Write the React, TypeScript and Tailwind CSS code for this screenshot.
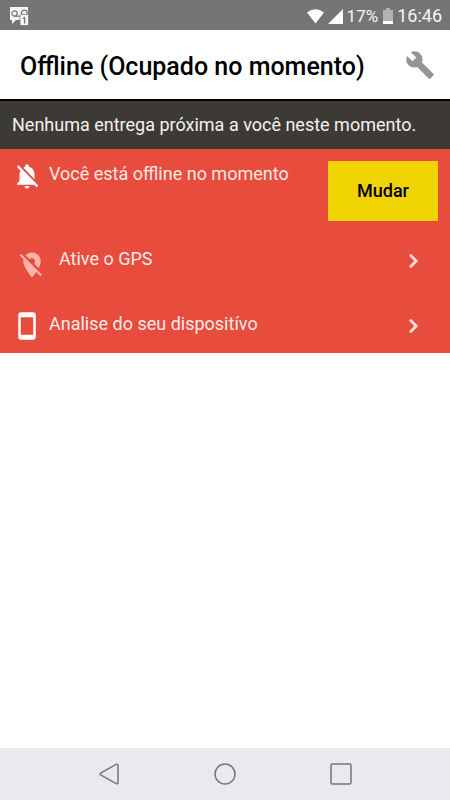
import type { ReactNode } from 'react';
import { MdBuild, MdNotificationsOff, MdStayCurrentPortrait } from 'react-icons/md';

const StatusBar = () => (
  <div className="flex h-[30px] items-center justify-between bg-[#757575] px-2 pt-0.5 text-[#f5f5f5]">
    <svg className="ml-[2px] h-[19px] w-[19px]" viewBox="0 0 19 19" aria-label="Voicemail">
      <path d="M0 0h18v13H6l-4 4v-4H0z" fill="#f5f5f5" />
      <circle cx="4.500" cy="6.500" r="2.600" fill="none" stroke="#757575" strokeWidth="1.200" />
      <path d="M4.500 9.200h5.500" stroke="#757575" strokeWidth="1.200" />
      <path d="M11.500 8V6a2.800 2.800 0 0 1 5.600 0v2" fill="none" stroke="#757575" strokeWidth="1.300" />
      <rect x="10" y="7.500" width="8.500" height="11" rx="1" fill="#f5f5f5" stroke="#757575" strokeWidth=".7" />
      <path d="M12.800 11.500l1.800-1v6" fill="none" stroke="#757575" strokeWidth="1.300" />
    </svg>
    <div className="flex items-center">
      <svg className="h-[15px] w-[17px]" viewBox="0 0 17 15" aria-label="Wi-Fi">
        <path d="M0 3.500Q8.500-3 17 3.500L8.500 14.500z" fill="#fff" />
      </svg>
      <svg className="ml-1 h-[15px] w-[15px]" viewBox="0 0 15 15" aria-label="Signal">
        <path d="M15 0v15H0z" fill="#fff" />
      </svg>
      <span className="ml-1 text-[17px] leading-5">17%</span>
      <svg className="ml-[5px] h-4 w-[10px]" viewBox="0 0 10 16" aria-label="Battery">
        <path d="M3 0h4v2h3v14H0V2h3z" fill="#b2b2b2" />
        <path d="M0 13h10v3H0z" fill="#fff" />
      </svg>
      <span className="ml-1 text-lg leading-5">16:46</span>
    </div>
  </div>
);

const LocationOff = () => (
  <svg className="mr-3 mt-1 h-[30px] w-[30px]" viewBox="0 0 24 24" fill="#ffb3ab">
    <path d="M12 6.500c1.380 0 2.500 1.120 2.500 2.500 0 .74-.33 1.390-.83 1.850l3.630 3.630c.98-1.860 1.700-3.800 1.700-5.480 0-3.870-3.130-7-7-7-1.980 0-3.760.83-5.040 2.150l3.190 3.190c.46-.52 1.110-.84 1.850-.84zM16.370 16.100L3.270 3 2 4.270l3.180 3.180C5.070 7.950 5 8.470 5 9c0 5.250 7 13 7 13s1.670-1.850 3.380-4.350L18.730 21 20 19.730z" />
  </svg>
);

const Chevron = () => (
  <svg className="mt-[7px] h-4 w-[11px]" viewBox="0 0 11 16" fill="none" stroke="#ffe0dc" strokeWidth="2.800">
    <path d="M2 1.800L8.200 8 2 14.200" />
  </svg>
);

interface AlertRowProps {
  icon: ReactNode;
  label: string;
  className: string;
}

const AlertRow = ({ icon, label, className }: AlertRowProps) => (
  <button className={`flex w-full items-start pr-[31px] text-left ${className}`}>
    {icon}
    <span className="flex-1 text-lg leading-[26px]">{label}</span>
    <Chevron />
  </button>
);

const NavBar = () => (
  <nav className="flex h-[52px] items-center justify-center gap-[92px] bg-[#e8eaed] text-[#757575]">
    <button aria-label="Back">
      <svg className="h-6 w-6" viewBox="0 0 24 24" fill="none" stroke="currentColor" strokeWidth="1.500">
        <path d="M19.200 2.400L4 10.800q-2 1.200 0 2.400l15.200 8.400q1.800.7 1.800-1.200V3.600q0-1.900-1.800-1.200z" />
      </svg>
    </button>
    <button aria-label="Home">
      <svg className="h-6 w-6" viewBox="0 0 24 24" fill="none" stroke="currentColor" strokeWidth="1.500">
        <circle cx="12" cy="12" r="10" />
      </svg>
    </button>
    <button aria-label="Recent apps">
      <svg className="h-6 w-6" viewBox="0 0 24 24" fill="none" stroke="currentColor" strokeWidth="1.500">
        <rect x="2" y="2" width="20" height="20" rx="1.500" />
      </svg>
    </button>
  </nav>
);

const App = () => {
  return (
    <div className="flex min-h-screen flex-col bg-white font-[Roboto,sans-serif]">
      <StatusBar />

      <header className="flex h-[71px] items-center justify-between border-b-2 border-black pl-5 pr-[15px]">
        <h1 className="pt-1 text-[25px] font-medium leading-8 text-black">Offline (Ocupado no momento)</h1>
        <button aria-label="Configurações">
          <MdBuild className="h-[30px] w-[30px] text-[#959595]" />
        </button>
      </header>

      <p className="bg-[#3d3a35] px-3 py-[11px] text-lg leading-[26px] text-[#f2f2f0]">
        Nenhuma entrega próxima a você neste momento.
      </p>

      <section className="bg-[#e74c3c] text-[#ffeae7]">
        <div className="flex items-start p-3">
          <MdNotificationsOff className="mr-[7px] h-[30px] w-[30px] text-white" />
          <span className="flex-1 text-lg leading-[26px]">Você está offline no momento</span>
          <button className="h-[60px] w-[110px] bg-[#f0d303] text-lg font-medium text-black">Mudar</button>
        </div>
        <AlertRow
          className="h-[66px] pl-[17px] pt-[13px]"
          icon={<LocationOff />}
          label="Ative o GPS"
        />
        <AlertRow
          className="h-[54px] pl-3 pt-3"
          icon={<MdStayCurrentPortrait className="mr-[7px] h-[30px] w-[30px] text-white" />}
          label="Analise do seu dispositívo"
        />
      </section>

      <main className="flex-1" />
      <NavBar />
    </div>
  );
};

export default App;
